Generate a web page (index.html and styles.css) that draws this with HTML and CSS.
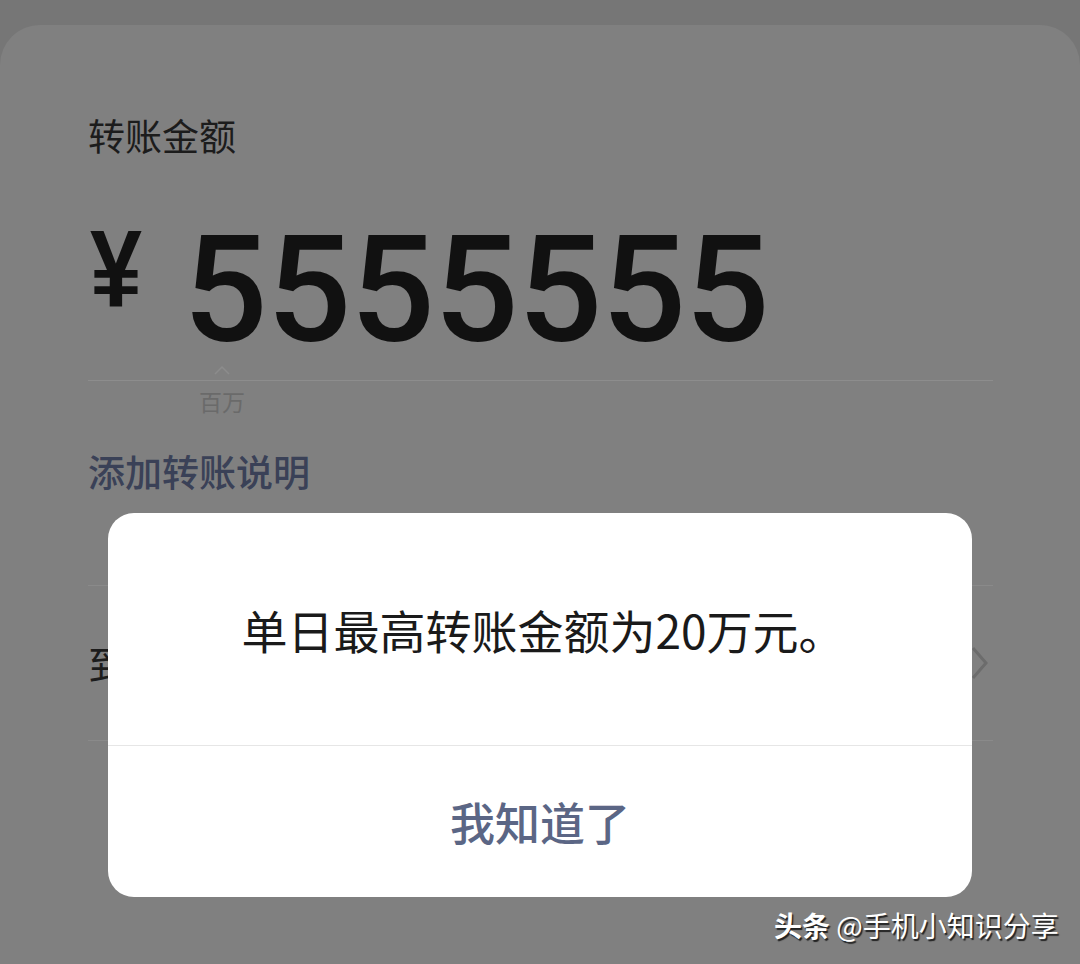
FILE: index.html
```html
<!DOCTYPE html>
<html lang="zh-CN">
<head>
<meta charset="utf-8">
<link rel="stylesheet" href="styles.css">
</head>
<body>
<div class="screen">
  <div class="card">
    <div class="label">转账金额</div>
    <div class="amount">
      <span class="yen">¥</span>
      <span class="digits">5555555</span>
    </div>
    <div class="amount-line">
      <div class="unit">
        <svg class="tick" width="16" height="10" viewBox="0 0 16 10"><path d="M1 9 L8 2 L15 9" fill="none" stroke="#8c8c8c" stroke-width="1.5"/></svg>
        <span class="unit-text">百万</span>
      </div>
    </div>
    <div class="note">添加转账说明</div>
    <div class="row">
      <span class="row-text">到账时间</span>
      <svg class="chev" width="18" height="34" viewBox="0 0 18 34"><path d="M2 2 L15 17 L2 32" fill="none" stroke="#6c6c6c" stroke-width="3"/></svg>
    </div>
  </div>

  <div class="dialog">
    <div class="msg">单日最高转账金额为20万元。</div>
    <div class="btn">我知道了</div>
  </div>

  <div class="watermark"><b>头条</b> @手机小知识分享</div>
</div>
</body>
</html>
```

FILE: styles.css
```css
html, body {
  margin: 0;
  padding: 0;
}
body {
  background: #767676;
  font-family: "Noto Sans CJK SC", "Noto Sans", sans-serif;
}
.screen {
  position: relative;
  width: 1080px;
  height: 964px;
  overflow: hidden;
  padding-top: 25px;
  box-sizing: border-box;
}
.card {
  background: #808080;
  border-radius: 40px 40px 0 0;
  height: 939px;
  padding: 85px 87px 0 88px;
  box-sizing: border-box;
}
.label {
  font-size: 37px;
  line-height: 50px;
  color: #1c1c1c;
}
.amount {
  display: flex;
  align-items: flex-start;
  margin-top: 70px;
  height: 150px;
}
.yen {
  font-family: "Liberation Sans", Arial, sans-serif;
  font-weight: 700;
  font-size: 110px;
  line-height: 110px;
  color: #111;
  margin-top: -16px;
  margin-left: 2px;
  width: 60px;
  transform: scaleX(0.85);
  transform-origin: left top;
}
.digits {
  font-family: Roboto, "Liberation Sans", sans-serif;
  font-weight: 500;
  font-size: 149px;
  line-height: 150px;
  letter-spacing: -1px;
  color: #111;
  margin-left: 33px;
  margin-top: -15px;
}
.amount-line {
  border-top: 1.5px solid #8d8d8d;
  height: 65px;
}
.unit {
  display: flex;
  flex-direction: column;
  align-items: center;
  width: 60px;
  margin-left: 104px;
  margin-top: -16px;
}
.tick {
  display: block;
}
.unit-text {
  font-size: 23px;
  line-height: 30px;
  color: #6a6a6a;
  margin-top: 11px;
}
.note {
  font-size: 37px;
  line-height: 50px;
  color: #3a4157;
  font-weight: 500;
}
.row {
  margin-top: 89px;
  border-top: 1.5px solid #8a8a8a;
  border-bottom: 1.5px solid #8a8a8a;
  height: 154px;
  display: flex;
  align-items: center;
  justify-content: space-between;
}
.row-text {
  font-size: 40px;
  color: #1c1c1c;
}
.chev {
  margin-right: 4px;
}
.dialog {
  position: absolute;
  left: 108px;
  top: 513px;
  width: 864px;
  height: 384px;
  background: #fff;
  border-radius: 26px;
  display: flex;
  flex-direction: column;
}
.msg {
  height: 233px;
  display: flex;
  align-items: center;
  justify-content: center;
  font-size: 46px;
  color: #1a1a1a;
  border-bottom: 1.5px solid #e6e6e6;
  box-sizing: border-box;
  padding-left: 6px;
}
.btn {
  flex: 1;
  display: flex;
  align-items: center;
  justify-content: center;
  font-size: 45px;
  font-weight: 500;
  color: #5b6685;
}
.watermark {
  position: absolute;
  left: 774px;
  top: 905px;
  font-size: 28px;
  line-height: 40px;
  color: #fff;
  text-shadow: 1.5px 1.5px 1px #222;
  white-space: nowrap;
}
.watermark b {
  font-weight: 700;
}
```
